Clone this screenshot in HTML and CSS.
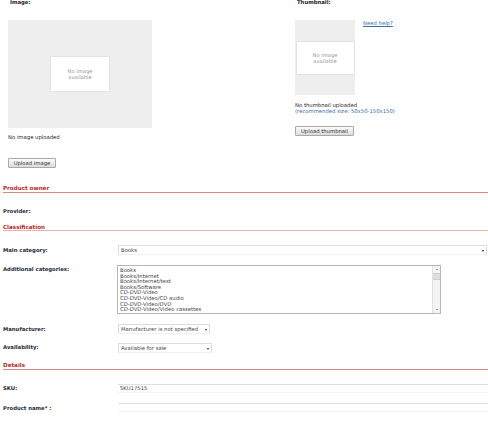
FILE: index.html
```html
<!DOCTYPE html>
<html>
<head>
<meta charset="utf-8">
<link rel="stylesheet" href="styles.css">
</head>
<body>
<div class="media">
  <div class="media-col media-image">
    <div class="top-label">Image:</div>
    <div class="img-box big"><div class="noimg">No image<br>available</div></div>
    <div class="note">No image uploaded</div>
    <div class="btn btn-image">Upload image</div>
  </div>
  <div class="media-col media-thumb">
    <div class="top-label">Thumbnail:</div>
    <div class="thumb-row">
      <div class="img-box small"><div class="noimg thumbimg">No image<br>available</div></div>
      <a class="help" href="#">Need help?</a>
    </div>
    <div class="note note-thumb">No thumbnail uploaded</div>
    <div class="note rec">(recommended size: 50x50-150x150)</div>
    <div class="btn btn-thumb">Upload thumbnail</div>
  </div>
</div>

<div class="form">
  <div class="section s-owner">Product owner</div>
  <div class="row r-provider"><div class="lbl">Provider:</div></div>

  <div class="section s-class light">Classification</div>
  <div class="row r-main">
    <div class="lbl">Main category:</div>
    <div class="select wide"><span>Books</span><i class="arrow"></i></div>
  </div>
  <div class="row r-add">
    <div class="lbl">Additional categories:</div>
    <div class="listbox">
      <div class="items">
        <div>Books</div>
        <div>Books/Internet</div>
        <div>Books/Internet/test</div>
        <div>Books/Software</div>
        <div>CD-DVD-Video</div>
        <div>CD-DVD-Video/CD audio</div>
        <div>CD-DVD-Video/DVD</div>
        <div>CD-DVD-Video/Video cassettes</div>
      </div>
      <div class="scroll">
        <i class="up"></i>
        <i class="thumbbar"></i>
        <i class="down"></i>
      </div>
    </div>
  </div>
  <div class="row r-manu">
    <div class="lbl">Manufacturer:</div>
    <div class="select manu"><span>Manufacturer is not specified</span><i class="arrow"></i></div>
  </div>
  <div class="row r-avail">
    <div class="lbl">Availability:</div>
    <div class="select avail"><span>Available for sale</span><i class="arrow"></i></div>
  </div>

  <div class="section s-details">Details</div>
  <div class="row r-sku">
    <div class="lbl">SKU:</div>
    <div class="input"><span>SKU17515</span></div>
  </div>
  <div class="row r-name">
    <div class="lbl">Product name* :</div>
    <div class="input"></div>
  </div>
</div>
</body>
</html>
```

FILE: styles.css
```css
html, body {
  margin: 0;
  padding: 0;
  background: #fff;
  overflow: hidden;
}
body {
  width: 488px;
  height: 425px;
  font-family: "DejaVu Sans", Verdana, sans-serif;
  font-size: 5.3px;
  color: #333;
  line-height: 6px;
}
.media {
  display: flex;
  padding-left: 8px;
}
.media-image { width: 287px; }
.media-thumb { flex: 1; }
.top-label {
  font-weight: bold;
  color: #222;
  margin-left: 2px;
  height: 5px;
  line-height: 5px;
}
.img-box {
  background: #eeeeee;
  display: flex;
  align-items: center;
  justify-content: center;
  margin-top: 15px;
}
.img-box.big { width: 144px; height: 108px; }
.img-box.small { width: 60px; height: 75px; margin-top: 0; }
.thumb-row {
  display: flex;
  align-items: flex-start;
  gap: 8px;
  margin-top: 15px;
}
.noimg {
  background: #fff;
  width: 58px;
  height: 34px;
  border: 1px solid #e2e2e2;
  border-radius: 1px;
  color: #999;
  text-align: center;
  display: flex;
  align-items: center;
  justify-content: center;
  font-size: 5.2px;
  line-height: 6px;
}
.noimg.thumbimg { width: 57px; height: 32px; }
.help {
  color: #3a6ea5;
  text-decoration: underline;
}
.note { margin-top: 6px; color: #222; }
.note-thumb { margin-top: 7px; }
.rec { margin-top: 0; color: #3a6ea5; }
.btn {
  display: inline-block;
  border: 1px solid #a8a8a8;
  border-radius: 1px;
  background: linear-gradient(#fbfbfb, #dcdcdc);
  color: #333;
  height: 8px;
  line-height: 8px;
  text-align: center;
}
.btn-image { width: 46px; margin-top: 18px; }
.btn-thumb { width: 57px; margin-top: 12px; }

.form { padding-left: 3px; }
.section {
  color: #c0282a;
  font-weight: bold;
  font-size: 5.6px;
  border-bottom: 1.5px solid #d88a84;
  height: 6.5px;
  line-height: 6px;
}
.section.light { border-bottom-color: #e9b4ac; }
.s-owner { margin-top: 17px; }
.s-class { margin-top: 10px; }
.s-details { margin-top: 9px; }
.row {
  display: flex;
  align-items: flex-start;
}
.lbl {
  width: 115px;
  flex: none;
  font-weight: bold;
  color: #1d2b3a;
}
.r-provider { margin-top: 15px; }
.r-main { margin-top: 14px; }
.r-main .lbl { padding-top: 2px; }
.r-add { margin-top: 10px; }
.r-add .lbl { padding-top: 1px; }
.r-manu { margin-top: 10px; }
.r-manu .lbl { padding-top: 2px; }
.r-avail { margin-top: 9px; }
.r-avail .lbl { padding-top: 1px; }
.r-sku { margin-top: 14px; }
.r-sku .lbl { padding-top: 1px; }
.r-name { margin-top: 10px; }
.r-name .lbl { padding-top: 2px; }

.select {
  position: relative;
  height: 8px;
  border: 1px solid #dcdcdc;
  border-bottom-color: #f0f0f0;
  background: #fff;
  color: #444;
  line-height: 8px;
  padding-left: 2px;
}
.select.wide { width: 365px; }
.select.manu { width: 88px; }
.select.avail { width: 90px; }
.arrow {
  position: absolute;
  right: 2px;
  top: 3.5px;
  width: 0;
  height: 0;
  border-left: 1.5px solid transparent;
  border-right: 1.5px solid transparent;
  border-top: 2px solid #222;
}
.listbox {
  display: flex;
  width: 322px;
  height: 47px;
  border: 1px solid #b8b8b8;
  margin-left: -1px;
  background: #fff;
}
.items {
  flex: 1;
  padding: 2px 0 0 2px;
  line-height: 5.6px;
  color: #444;
}
.scroll {
  width: 7px;
  border-left: 1px solid #e0e0e0;
  background: #f4f4f4;
  display: flex;
  flex-direction: column;
  align-items: center;
}
.scroll .up, .scroll .down {
  width: 0;
  height: 0;
  border-left: 1px solid transparent;
  border-right: 1px solid transparent;
  margin-top: 3px;
}
.scroll .up { border-bottom: 1.5px solid #444; }
.scroll .down { border-top: 1.5px solid #444; margin-top: auto; margin-bottom: 3px; }
.scroll .thumbbar {
  width: 7px;
  height: 5px;
  background: #dedede;
  border-top: 1px solid #cfcfcf;
  border-bottom: 1px solid #cfcfcf;
  margin-top: 3px;
}
.input {
  flex: 1;
  height: 7px;
  border-top: 1.5px solid #dedede;
  border-bottom: 1px solid #f3f3f3;
  line-height: 7px;
  padding-left: 2px;
  color: #444;
}
```
